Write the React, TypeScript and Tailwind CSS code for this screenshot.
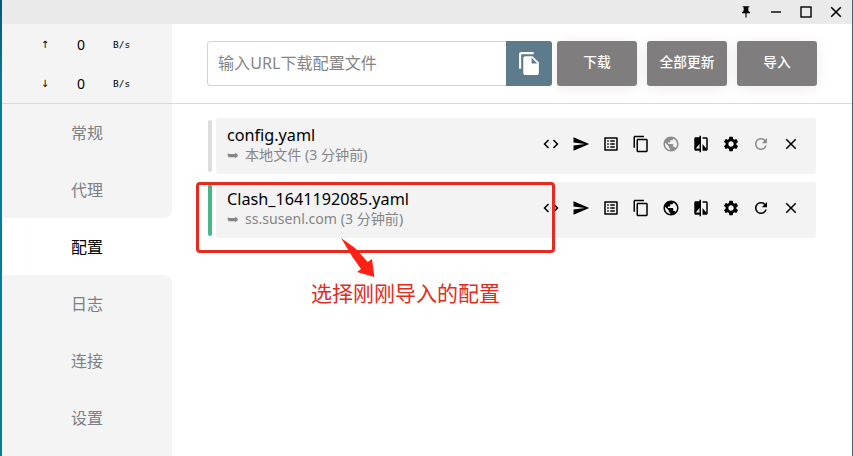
import type { ReactNode } from "react";
import type { IconType } from "react-icons";
import {
  MdClose,
  MdCode,
  MdCompare,
  MdContentCopy,
  MdFileCopy,
  MdListAlt,
  MdPublic,
  MdPushPin,
  MdRefresh,
  MdSend,
  MdSettings,
} from "react-icons/md";

const actions: { Icon: IconType; remoteOnly?: boolean }[] = [
  { Icon: MdCode },
  { Icon: MdSend },
  { Icon: MdListAlt },
  { Icon: MdContentCopy },
  { Icon: MdPublic, remoteOnly: true },
  { Icon: MdCompare },
  { Icon: MdSettings },
  { Icon: MdRefresh, remoteOnly: true },
  { Icon: MdClose },
];

const menu = ["常规", "代理", "配置", "日志", "连接", "设置"];

function TitleBar() {
  return (
    <header className="flex h-6 shrink-0 items-center justify-end bg-[#eaeaea] pr-[1px] text-black">
      <span className="flex w-[30px] justify-center">
        <MdPushPin size={14} />
      </span>
      <span className="flex w-[30px] justify-center">
        <span className="h-[2px] w-[10px] bg-[#444]" />
      </span>
      <span className="flex w-[30px] justify-center">
        <svg width="12" height="12" viewBox="0 0 12 12" fill="none" stroke="black" strokeWidth="1.4">
          <rect x="1" y="1" width="10" height="10" />
        </svg>
      </span>
      <span className="flex w-[30px] justify-center">
        <svg width="12" height="12" viewBox="0 0 12 12" fill="none" stroke="black" strokeWidth="1.6">
          <path d="M1.2 1.2 10.8 10.8M10.8 1.2 1.2 10.8" />
        </svg>
      </span>
    </header>
  );
}

function Speed({ arrow }: { arrow: string }) {
  return (
    <div className="flex h-[39px] items-center text-black">
      <span className="ml-[37px] w-3 text-center font-['DejaVu_Sans',sans-serif] text-[10px]">{arrow}</span>
      <span className="ml-[22px] w-4 text-center text-[14px]">0</span>
      <span className="ml-[24px] pt-[2px] font-['DejaVu_Sans_Mono',monospace] text-[9.5px]">B/s</span>
    </div>
  );
}

function Sidebar() {
  return (
    <nav>
      {menu.map((label, i) => {
        const tone =
          i === 2
            ? "bg-white text-black"
            : i === 1
              ? "bg-[#f4f4f4] text-[#7a8084] rounded-br-lg"
              : i === 3
                ? "bg-[#f4f4f4] text-[#7a8084] rounded-tr-lg"
                : "bg-[#f4f4f4] text-[#7a8084]";
        return (
          <div key={label} className={`flex h-[57px] items-center justify-center pt-px text-[16px] ${tone}`}>
            {label}
          </div>
        );
      })}
    </nav>
  );
}

function ActionButton({ children }: { children: ReactNode }) {
  return (
    <button className="h-[45px] w-20 rounded-[3px] bg-[#7f7d7d] pb-[2px] text-[13.7px] font-medium whitespace-nowrap text-white shadow-[0_2px_14px_rgba(0,0,0,0.08)]">
      {children}
    </button>
  );
}

function Profile({
  name,
  source,
  active = false,
}: {
  name: string;
  source: string;
  active?: boolean;
}) {
  return (
    <div className="flex h-14 items-center">
      <span className={`mr-1 h-[52px] w-1 rounded-full ${active ? "bg-[#48b685]" : "bg-[#dddddd]"}`} />
      <div className="flex h-14 w-[600px] items-center rounded-[3px] bg-[#f3f3f3] pl-[11px]">
        <div className="flex-1 pb-[2px] whitespace-nowrap">
          <div className="h-5 text-[16.2px] leading-5 text-black">{name}</div>
          <div className="flex h-5 items-center text-[14.1px] leading-5 text-[#858585]">
            <span className="w-[18px] font-['DejaVu_Sans',sans-serif] text-[14px]">➥</span>
            {source}
          </div>
        </div>
        <div className="flex pr-[10px] pb-1">
          {actions.map(({ Icon, remoteOnly }, i) => (
            <span key={i} className={`flex w-[30px] justify-center ${remoteOnly && !active ? "text-[#8c8c8c]" : "text-black"}`}>
              <Icon size={18} />
            </span>
          ))}
        </div>
      </div>
    </div>
  );
}

export default function App() {
  return (
    <div className="relative flex h-[456px] w-[853px] overflow-hidden bg-white font-['Noto_Sans','Noto_Sans_CJK_SC',sans-serif]">
      <div className="w-[2px] shrink-0 bg-linear-to-b from-[#075878] via-[#087c98] via-20% to-[#087b95]" />
      <div className="flex min-w-0 flex-1 flex-col">
        <TitleBar />
        <div className="flex h-20 shrink-0 border-b border-[#d9d9d9]">
          <div className="w-[170px] bg-[#f4f4f4] pt-[1px]">
            <Speed arrow="↑" />
            <Speed arrow="↓" />
          </div>
          <div className="flex pt-[17px] pl-[35px]">
            <div className="flex h-[45px] w-[300px] items-center rounded-l-[3px] border border-[#d3d3d3] pl-[10px] text-[16.1px] text-[#858585]">
              输入URL下载配置文件
            </div>
            <button className="-ml-px flex h-[45px] w-[46px] items-center justify-center rounded-r-[3px] bg-[#5d7b8b] text-white">
              <MdFileCopy size={25} />
            </button>
            <div className="ml-[5px] flex gap-[10px]">
              <ActionButton>下载</ActionButton>
              <ActionButton>全部更新</ActionButton>
              <ActionButton>导入</ActionButton>
            </div>
          </div>
        </div>
        <div className="flex min-h-0 flex-1">
          <aside className="flex w-[170px] shrink-0 flex-col bg-white">
            <Sidebar />
            <div className="flex-1 bg-[#f4f4f4]" />
          </aside>
          <main className="flex flex-col gap-2 pt-[14px] pl-[36px]">
            <Profile name="config.yaml" source="本地文件 (3 分钟前)" />
            <Profile name="Clash_1641192085.yaml" source="ss.susenl.com (3 分钟前)" active />
          </main>
        </div>
      </div>
      <div className="w-px shrink-0 bg-[#087f91]" />

      <div className="absolute top-[182px] left-[196px] h-[71px] w-[359px] rounded-[4px] border-[3px] border-[#e32b20]" />
      <svg className="absolute top-[236px] left-[338px]" width="40" height="44" viewBox="0 0 40 44">
        <path d="M3 2 L17 12 L29.7 26 L34 23 L36.3 41 L19 36 L23 33 L14.5 21 Z" fill="#ff2114" />
      </svg>
      <div className="absolute top-[278px] left-[311px] text-[21px] leading-[30px] whitespace-nowrap text-[#e32b20]">
        选择刚刚导入的配置
      </div>
    </div>
  );
}
